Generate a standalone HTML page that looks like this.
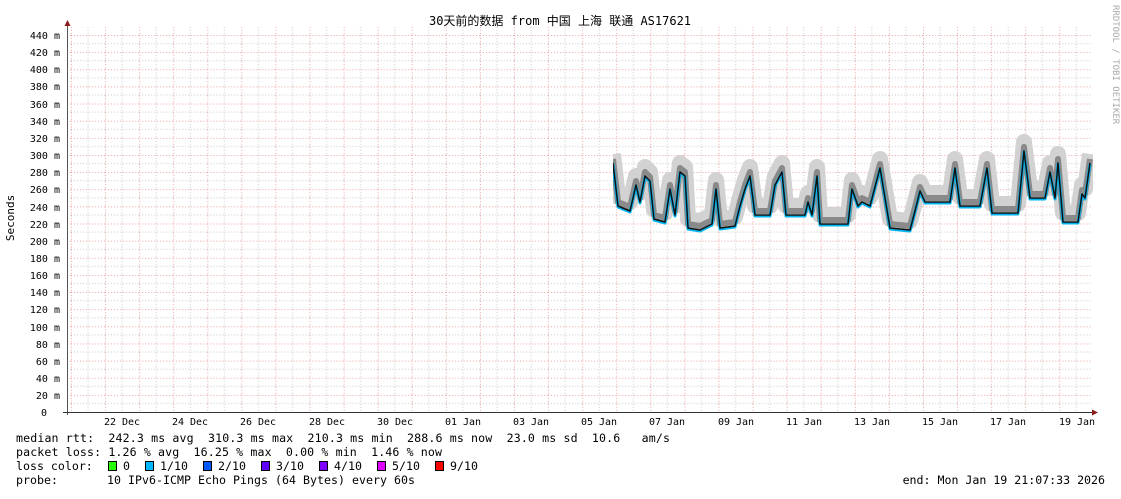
<!DOCTYPE html>
<html><head><meta charset="utf-8"><style>
html,body{margin:0;padding:0;background:#fff;}
body{width:1121px;height:494px;overflow:hidden;}
text{font-family:"DejaVu Sans Mono","Liberation Mono","Noto Sans CJK SC",monospace;white-space:pre;}
</style></head><body>
<svg width="1121" height="494" viewBox="0 0 1121 494" xmlns="http://www.w3.org/2000/svg">
<defs>
<pattern id="g" patternUnits="userSpaceOnUse" x="71" y="412" width="34.08" height="17.136">
<line x1="17.04" y1="0" x2="17.04" y2="17.136" stroke="#c8c8c8" stroke-width="1" stroke-dasharray="1,2"/>
<line x1="0" y1="8.568" x2="34.08" y2="8.568" stroke="#c8c8c8" stroke-width="1" stroke-dasharray="1,2"/>
<line x1="0.5" y1="0" x2="0.5" y2="17.136" stroke="#f0a0a0" stroke-width="1" stroke-dasharray="1,2"/>
<line x1="0" y1="0.5" x2="34.08" y2="0.5" stroke="#f0a0a0" stroke-width="1" stroke-dasharray="1,2"/>
</pattern>
<clipPath id="c"><rect x="613" y="27" width="480" height="385"/></clipPath>
</defs>
<rect x="68" y="27" width="1024" height="385" fill="url(#g)"/>
<text x="560" y="25" font-size="12" text-anchor="middle" fill="#000">30天前的数据 from 中国 上海 联通 AS17621</text>
<text transform="translate(1113,5) rotate(90)" font-size="9" fill="#aaa">RRDTOOL / TOBI OETIKER</text>
<text transform="translate(14,218) rotate(-90)" font-size="11" text-anchor="middle" fill="#000">Seconds</text>
<g font-size="10" fill="#000" text-anchor="end">
<text x="60" y="39">440 m</text><text x="60" y="56">420 m</text><text x="60" y="73">400 m</text>
<text x="60" y="90">380 m</text><text x="60" y="108">360 m</text><text x="60" y="125">340 m</text>
<text x="60" y="142">320 m</text><text x="60" y="159">300 m</text><text x="60" y="176">280 m</text>
<text x="60" y="193">260 m</text><text x="60" y="211">240 m</text><text x="60" y="228">220 m</text>
<text x="60" y="245">200 m</text><text x="60" y="262">180 m</text><text x="60" y="279">160 m</text>
<text x="60" y="296">140 m</text><text x="60" y="313">120 m</text><text x="60" y="331">100 m</text>
<text x="60" y="348">80 m</text><text x="60" y="365">60 m</text><text x="60" y="382">40 m</text>
<text x="60" y="399">20 m</text><text x="47" y="416">0</text>
</g>
<g font-size="10" fill="#000" text-anchor="middle">
<text x="122" y="425">22 Dec</text><text x="190" y="425">24 Dec</text><text x="258" y="425">26 Dec</text>
<text x="327" y="425">28 Dec</text><text x="395" y="425">30 Dec</text><text x="463" y="425">01 Jan</text>
<text x="531" y="425">03 Jan</text><text x="599" y="425">05 Jan</text><text x="667" y="425">07 Jan</text>
<text x="736" y="425">09 Jan</text><text x="804" y="425">11 Jan</text><text x="872" y="425">13 Jan</text>
<text x="940" y="425">15 Jan</text><text x="1008" y="425">17 Jan</text><text x="1077" y="425">19 Jan</text>
</g>
<g fill="none" stroke-linejoin="round" clip-path="url(#c)">
<path transform="translate(0,-9)" stroke="#d2d2d2" stroke-width="16" d="M613,163 L618,206 L630,211 L636,185 L640,202 L645,176 L650,181 L654,219 L665,222 L670,189 L675,215 L680,172 L685,176 L688,228 L700,230 L712,224 L716,189 L720,228 L735,226 L740,206 L745,189 L750,176 L755,215 L770,215 L775,185 L782,172 L786,215 L805,215 L808,202 L812,215 L817,176 L820,224 L848,224 L852,189 L858,206 L862,202 L870,206 L880,168 L890,228 L910,230 L915,211 L920,191 L925,202 L950,202 L955,168 L960,206 L980,206 L987,168 L992,213 L1018,213 L1024,151 L1030,198 L1045,198 L1050,172 L1055,198 L1058,163 L1063,222 L1078,222 L1082,194 L1085,198 L1090,163"/>
<path transform="translate(0,-4)" stroke="#8a8a8a" stroke-width="6" d="M613,163 L618,206 L630,211 L636,185 L640,202 L645,176 L650,181 L654,219 L665,222 L670,189 L675,215 L680,172 L685,176 L688,228 L700,230 L712,224 L716,189 L720,228 L735,226 L740,206 L745,189 L750,176 L755,215 L770,215 L775,185 L782,172 L786,215 L805,215 L808,202 L812,215 L817,176 L820,224 L848,224 L852,189 L858,206 L862,202 L870,206 L880,168 L890,228 L910,230 L915,211 L920,191 L925,202 L950,202 L955,168 L960,206 L980,206 L987,168 L992,213 L1018,213 L1024,151 L1030,198 L1045,198 L1050,172 L1055,198 L1058,163 L1063,222 L1078,222 L1082,194 L1085,198 L1090,163"/>
<path transform="translate(0,1)" stroke="#00b4f0" stroke-width="3" d="M613,163 L618,206 L630,211 L636,185 L640,202 L645,176 L650,181 L654,219 L665,222 L670,189 L675,215 L680,172 L685,176 L688,228 L700,230 L712,224 L716,189 L720,228 L735,226 L740,206 L745,189 L750,176 L755,215 L770,215 L775,185 L782,172 L786,215 L805,215 L808,202 L812,215 L817,176 L820,224 L848,224 L852,189 L858,206 L862,202 L870,206 L880,168 L890,228 L910,230 L915,211 L920,191 L925,202 L950,202 L955,168 L960,206 L980,206 L987,168 L992,213 L1018,213 L1024,151 L1030,198 L1045,198 L1050,172 L1055,198 L1058,163 L1063,222 L1078,222 L1082,194 L1085,198 L1090,163"/>
<path stroke="#111" stroke-width="1.5" d="M613,163 L618,206 L630,211 L636,185 L640,202 L645,176 L650,181 L654,219 L665,222 L670,189 L675,215 L680,172 L685,176 L688,228 L700,230 L712,224 L716,189 L720,228 L735,226 L740,206 L745,189 L750,176 L755,215 L770,215 L775,185 L782,172 L786,215 L805,215 L808,202 L812,215 L817,176 L820,224 L848,224 L852,189 L858,206 L862,202 L870,206 L880,168 L890,228 L910,230 L915,211 L920,191 L925,202 L950,202 L955,168 L960,206 L980,206 L987,168 L992,213 L1018,213 L1024,151 L1030,198 L1045,198 L1050,172 L1055,198 L1058,163 L1063,222 L1078,222 L1082,194 L1085,198 L1090,163"/>
</g>
<line x1="67.5" y1="24" x2="67.5" y2="415" stroke="#555" stroke-width="1"/>
<line x1="63" y1="412.5" x2="1094" y2="412.5" stroke="#333" stroke-width="1"/>
<polygon points="64.5,26 70.5,26 67.5,20" fill="#8b1a1a"/>
<polygon points="1092,409.5 1092,415.5 1098,412.5" fill="#8b1a1a"/>
<g font-size="11.6" fill="#000">
<text x="16" y="442" textLength="654">median rtt:  242.3 ms avg  310.3 ms max  210.3 ms min  288.6 ms now  23.0 ms sd  10.6   am/s</text>
<text x="16" y="456" textLength="426">packet loss: 1.26 % avg  16.25 % max  0.00 % min  1.46 % now</text>
<text x="16" y="470">loss color:</text>
<text x="16" y="484" textLength="399">probe:       10 IPv6-ICMP Echo Pings (64 Bytes) every 60s</text>
<text x="1105" y="484" text-anchor="end">end: Mon Jan 19 21:07:33 2026</text>
</g>
<g stroke="#000" stroke-width="1">
<rect x="108.5" y="461.5" width="8" height="9" fill="#26ff00"/>
<rect x="145.5" y="461.5" width="8" height="9" fill="#00b8ff"/>
<rect x="203.5" y="461.5" width="8" height="9" fill="#0059ff"/>
<rect x="261.5" y="461.5" width="8" height="9" fill="#5e00ff"/>
<rect x="319.5" y="461.5" width="8" height="9" fill="#7e00ff"/>
<rect x="377.5" y="461.5" width="8" height="9" fill="#dd00ff"/>
<rect x="435.5" y="461.5" width="8" height="9" fill="#ff0000"/>
</g>
<g font-size="11.6" fill="#000">
<text x="123" y="470">0</text><text x="160" y="470">1/10</text><text x="218" y="470">2/10</text>
<text x="276" y="470">3/10</text><text x="334" y="470">4/10</text><text x="392" y="470">5/10</text><text x="450" y="470">9/10</text>
</g>
</svg>
</body></html>
